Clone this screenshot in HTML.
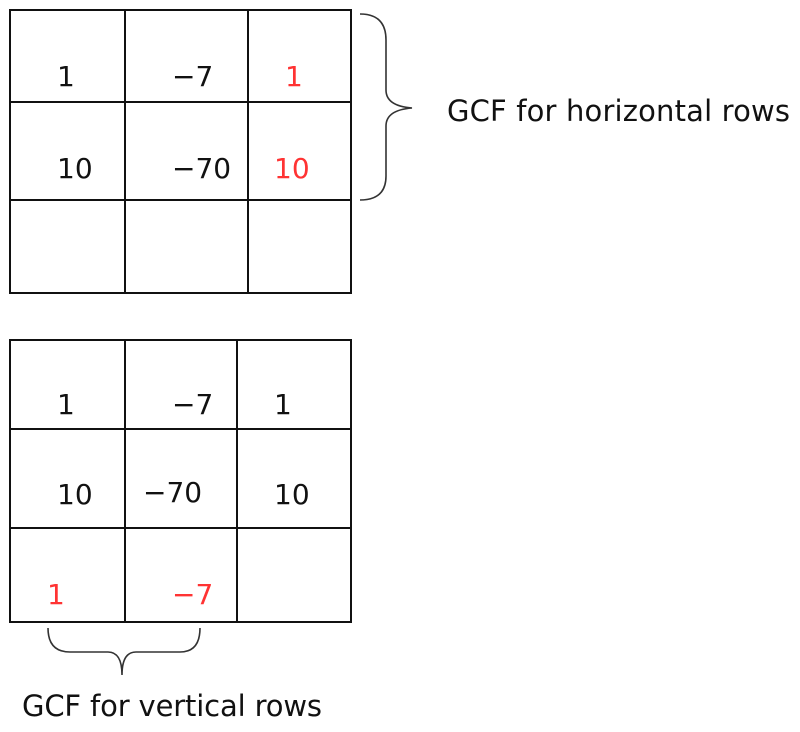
<!DOCTYPE html>
<html><head><style>body{margin:0;background:#fff}svg{display:block}</style></head><body>
<svg width="800" height="732" viewBox="0 0 800 732" xmlns="http://www.w3.org/2000/svg" font-family="DejaVu Sans, Liberation Sans, sans-serif" font-size="28">
<g stroke="#111" stroke-width="2" fill="none">
<rect x="10" y="10" width="341" height="283"/>
<line x1="125" y1="10" x2="125" y2="293"/><line x1="248" y1="10" x2="248" y2="293"/>
<line x1="10" y1="102" x2="351" y2="102"/><line x1="10" y1="200" x2="351" y2="200"/>
<rect x="10" y="340" width="341" height="282"/>
<line x1="125" y1="340" x2="125" y2="622"/><line x1="237" y1="340" x2="237" y2="622"/>
<line x1="10" y1="429" x2="351" y2="429"/><line x1="10" y1="528" x2="351" y2="528"/>
</g>
<g stroke="#333" stroke-width="1.6" fill="none">
<path d="M360 14 Q386 14 386 40 L386 90 Q386 106 412 108 Q386 110 386 126 L386 176 Q386 200 360 200"/>
<path d="M48 628 Q48 652 70 652 L108 652 Q122 652 122 675 Q122 652 136 652 L180 652 Q200 652 200 628"/>
</g>
<g fill="#111">
<text x="57" y="86">1</text><text x="172" y="86">−7</text>
<text x="57" y="178">10</text><text x="172" y="178">−70</text>
<text x="57" y="414">1</text><text x="172" y="414">−7</text><text x="274" y="414">1</text>
<text x="57" y="504">10</text><text x="143" y="502">−70</text><text x="274" y="504">10</text>
<text x="447" y="121" font-size="29" textLength="343">GCF for horizontal rows</text>
<text x="22" y="716" font-size="29" textLength="300">GCF for vertical rows</text>
</g>
<g fill="#ff3333">
<text x="285" y="86">1</text><text x="274" y="178">10</text>
<text x="47" y="604">1</text><text x="172" y="604">−7</text>
</g>
</svg>
</body></html>
